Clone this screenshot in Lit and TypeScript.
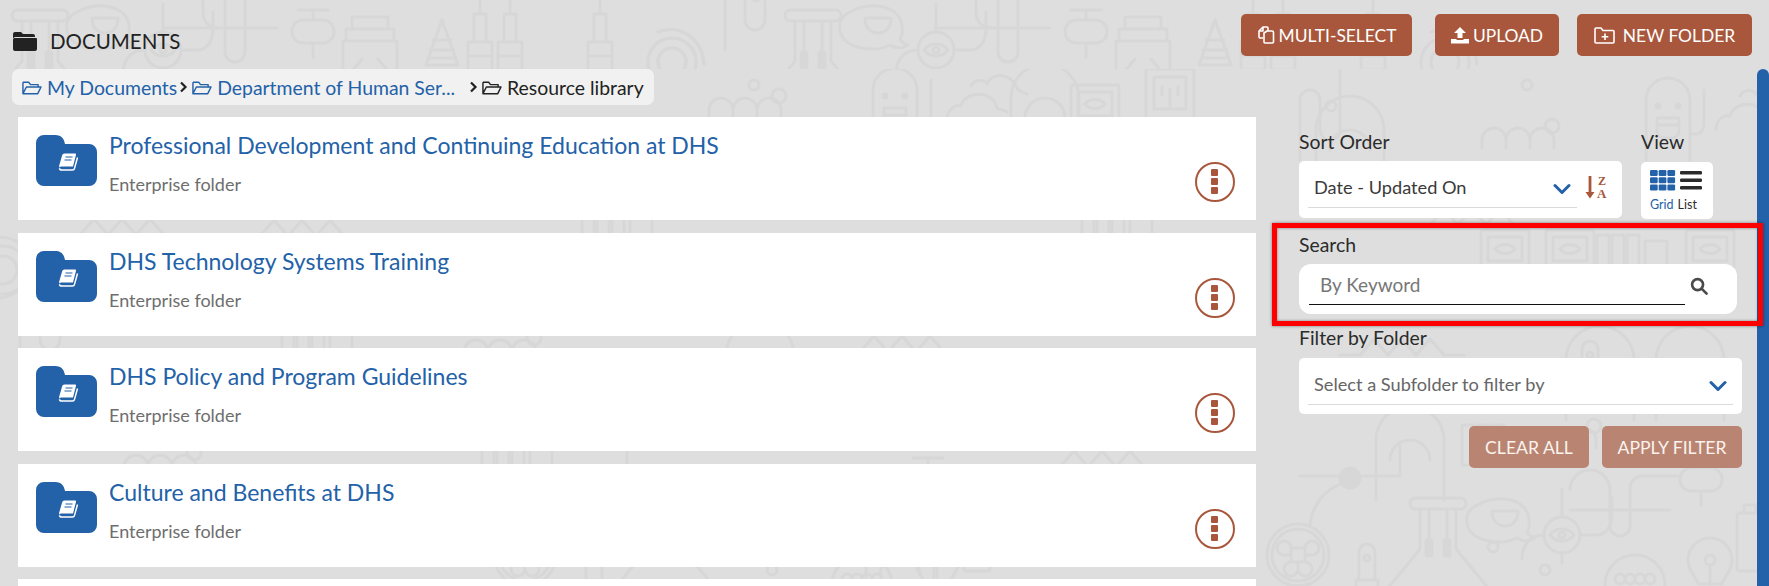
import { LitElement, html, css, svg } from "lit";
import { customElement } from "lit/decorators.js";

const FOLDER_OPEN = "M2 4.5h6l2 2.5h8v3 M2 4.5v12 M2 16.5l3.6-7h15.4l-3.4 7z";

const openIcon = () => html`<svg class="open" viewBox="0 0 22 20" fill="none" stroke="currentColor" stroke-width="1.5" stroke-linejoin="round"><path d=${FOLDER_OPEN}></path></svg>`;

const chevron = () => html`<svg class="chev" viewBox="0 0 18 12" fill="none" stroke="#2361a8" stroke-width="3" stroke-linecap="round" stroke-linejoin="round"><path d="M2 2.5l7 7 7-7"></path></svg>`;

const motifs: Record<string, any> = {
  flask: svg`<rect x="-28" y="0" width="56" height="11" rx="5.5"/><path d="M-18 11v40L-50 90M18 11v40L50 90M-9 11v38M9 11v38"/><rect x="-12" y="42" width="6" height="16" rx="2" fill="#d7d7d7"/><rect x="6" y="42" width="6" height="16" rx="2" fill="#d7d7d7"/>`,
  bubble: svg`<path d="M-28 0c22-12 50-6 52 14 1 6 0 10-2 13 2 4 6 5 8 6-6 4-13 3-18 0-16 8-46 4-50-14-2-9 2-15 10-19z"/><path d="M-13 6h26c0 10-6 15-13 15s-13-5-13-15z"/>`,
  eye: svg`<circle cx="0" cy="0" r="18"/><path d="M-12 0c6-8 18-8 24 0-6 8-18 8-24 0z"/><circle r="3"/><path d="M0 -18v-28M18 0h16c8 0 16-6 16-22v-16M-18 0c-14 0-22 10-22 24M0 18v10"/>`,
  tube: svg`<path d="M-10 -40v62a10 10 0 0 0 20 0v-62M-72 -2H42M-32 -40v22c0 10 6 16 18 16"/>`,
  lozenge: svg`<rect x="-20" y="0" width="42" height="23" rx="11"/><path d="M1 0v-10M-14 -10h30M1 23v14"/>`,
  jar: svg`<path d="M-18 0h36v12h-36zM-24 12h48v12h-48zM-27 24h54v60h-54z"/><path d="M-8 42l-10 12 10 12M8 42l10 12-10 12"/>`,
  cone: svg`<path d="M0 0l16 45H-16zM-9 20H9M-12 30h24M-14 38h28"/>`,
  syringe: svg`<path d="M-6 0h12v28h-12zM-12 28h24v28h-24zM0 0v-14M-12 42h24"/>`,
  coil: svg`<circle r="24"/><circle r="14"/><path d="M-30 8c6 26 40 26 52 4M-14 -30c22-8 44 6 46 32"/>`,
  pills: svg`<path d="M-36 18v-8a12 12 0 0 1 24 0v8M-12 18v-8a12 12 0 0 1 24 0v8M12 18v-8a12 12 0 0 1 24 0v8"/><circle cx="34" cy="-4" r="7"/>`,
  robot: svg`<path d="M-22 50V-10a22 22 0 0 1 44 0v60"/><circle cx="-10" cy="-4" r="2" fill="#d7d7d7"/><circle cx="10" cy="-4" r="2" fill="#d7d7d7"/><path d="M-11 8h22v14a8 8 0 0 1-8 6h-6a8 8 0 0 1-8-6zM-11 15h22M22 24h6c6 0 8-6 8-12v-32"/>`,
  cloud: svg`<path d="M-46 30c0-10 8-16 14-14 4-16 32-16 36 2 2 2 8 2 10 4M-22 -4c4-8 14-6 16-2 4-12 24-12 30 4 2 4 6 4 10 6"/>`,
  monitor: svg`<rect x="-24" y="-20" width="48" height="38" rx="2"/><rect x="-17" y="-13" width="34" height="24"/><path d="M-10 -1c5-6 15-6 20 0-5 6-15 6-20 0z"/>`,
  frame: svg`<rect x="-24" y="-36" width="48" height="90" rx="2"/><rect x="-16" y="-28" width="32" height="32"/><path d="M-10 34h20v8h-20zM0 -16v18M-8 -18v8M8 -18v8"/>`,
  bars: svg`<rect x="-18" y="-20" width="12" height="40"/><rect x="-3" y="-20" width="12" height="40"/><rect x="12" y="-20" width="12" height="40"/><rect x="30" y="-14" width="22" height="28"/>`,
  wave: svg`<path d="M-60 10h20l14-16 14 16 14-16 14 16 14-16 14 16h20"/>`,
  big: svg`<path d="M-34 70V10a34 34 0 0 1 68 0v60"/><path d="M-20 30a20 20 0 0 1 40 0"/>`,
  cmd: svg`<circle r="31"/><circle r="26"/><path d="M-7 -7h14v14h-14zM-7 -7a7 7 0 1 0-7 7h7M7 -7a7 7 0 1 1 7 7h-7M-7 7a7 7 0 1 0 7 7v-7M7 7a7 7 0 1 1-7 7v-7"/>`,
  led: svg`<path d="M-8 22V-6a8 8 0 0 1 16 0v28zM-11 22h22v8h-22z"/><circle r="3"/>`,
  bulb: svg`<path d="M-12 24c-2-8-10-12-10-24a22 22 0 0 1 44 0c0 12-8 16-10 24z"/><path d="M-10 30h20"/><circle cx="0" cy="0" r="5"/><path d="M0 5v19"/>`,
  ball: svg`<circle r="30"/><circle cx="-15" cy="-6" r="5"/><circle cx="-5" cy="-6" r="5"/><circle cx="5" cy="-6" r="5"/><circle cx="15" cy="-6" r="5"/>`,
  dot: svg`<circle r="5"/>`,
  solid: svg`<circle r="10" fill="#d7d7d7"/><path d="M-50 -2h38M10 -2h40v-30M-10 6c-22 10-28 26-30 40"/>`,
  pipe: svg`<path d="M0 70V10a10 10 0 0 1 20 0v30a10 10 0 0 0 20 0V-20"/><circle cx="31" cy="16" r="5"/>`,
  loop: svg`<path d="M-40 -10a20 20 0 1 1 40 0v36a10 10 0 0 0 20 0V-12a12 12 0 0 1 12-12h38M-40 10h100"/>`,
  batt: svg`<rect x="-13" y="-22" width="26" height="58" rx="3"/><path d="M-6 -22v-8h12v8"/>`,
};

type P = [string, number, number];
const P = 773;
const topRow: P[] = [
  ["coil", 672, 62], ["pipe", 725, -20], ["flask", 813, 10], ["bubble", 878, 12], ["eye", 936, 50], ["tube", 1008, 30],
  ["lozenge", 1085, 20], ["jar", 1143, 17], ["cone", 1215, 20], ["syringe", 1253, 14], ["syringe", 1283, 14], ["syringe", 1373, 14], ["coil", 1445, 62],
];
const bodyRow: P[] = [
  ["coil", 695, 35], ["dot", 754, 85], ["pills", 745, 100], ["robot", 895, 100], ["cloud", 993, 90], ["big", 1045, 88], ["monitor", 1095, 105], ["frame", 1170, 105],
  ["dot", 1527, 85], ["pills", 1518, 130], ["robot", 1668, 110], ["cloud", 1762, 100], ["bars", 1615, 255], ["monitor", 1505, 250], ["monitor", 1570, 250],
  ["big", 1350, 120], ["wave", 1400, 345], ["big", 1600, 350], ["led", 1590, 355], ["big", 1410, 430], ["bars", 1480, 445], ["pills", 1560, 430],
  ["big", 1690, 350], ["monitor", 1710, 250], ["pipe", 1300, 90], ["wave", 1470, 215],
  ["pipe", 20, 300], ["coil", 3, 270], ["bars", 600, 226], ["wave", 300, 226], ["wave", 900, 342], ["pills", 160, 457], ["big", 760, 345], ["bars", 500, 457], ["wave", 120, 225], ["big", 900, 545],
  ["wave", 1100, 457], ["bars", 300, 342], ["pills", 500, 342], ["bars", 1100, 226],
];
const bottomRow: P[] = [
  ["cmd", 1298, 555], ["solid", 1350, 478], ["led", 1367, 558], ["flask", 1438, 498], ["dot", 1493, 547], ["bubble", 1505, 505], ["eye", 1562, 535], ["loop", 1610, 500], ["lozenge", 1700, 468], ["bulb", 1710, 560], ["ball", 1635, 585], ["batt", 1750, 535], ["dot", 1545, 570],
];

const place = (list: P[]) => list.map(([n, x, y]) => svg`<g transform="translate(${x} ${y})">${motifs[n]}</g>`);
const shift = (list: P[], d: number) => list.map(([n, x, y]) => [n, x + d, y] as P);

const CARDS = [
  "Professional Development and Continuing Education at DHS",
  "DHS Technology Systems Training",
  "DHS Policy and Program Guidelines",
  "Culture and Benefits at DHS",
];

@customElement("app-root")
export class AppRoot extends LitElement {
  static styles = css`
    :host { display: block; height: 100vh; overflow: hidden; font-family: Lato, "Noto Sans", sans-serif; color: #2b2b2b; }
    .page { position: relative; height: 586px; overflow: hidden; background: #dedede; }
    .doodles { position: absolute; left: 0; top: 0; width: 1769px; height: 586px; fill: none; stroke: #d7d7d7; stroke-width: 3; stroke-linecap: round; stroke-linejoin: round; }
    .content { position: relative; }
    .head { display: flex; align-items: center; padding: 14px 17px 0 12px; height: 42px; }
    .title { display: flex; align-items: center; gap: 13px; flex: 1; font-size: 20.5px; color: #222; padding-top: 12px; }
    .title svg { width: 25px; height: 20px; }
    .btn { display: inline-flex; align-items: center; justify-content: center; height: 42px; box-sizing: border-box; background: #a9573c; color: #fff; border-radius: 5px; font-size: 17.4px; gap: 4px; }
    .btn svg { fill: none; stroke: #fff; stroke-width: 1.6; }
    .b1 { width: 171px; margin-right: 23px; }
    .b2 { width: 124px; margin-right: 18px; }
    .b3 { width: 175px; gap: 8px; }
    .crumb { display: flex; align-items: center; height: 36px; box-sizing: border-box; width: 642px; margin: 13px 0 0 12px; padding-left: 9px; background: #f1f1f1; border-radius: 7px; font-size: 19.4px; color: #2361a8; white-space: nowrap; }
    .open { width: 21px; height: 19px; margin-right: 5px; flex: none; }
    .sep { width: 10px; height: 12px; margin: 0 3px 0 1px; flex: none; fill: none; stroke: #222; stroke-width: 2.2; }
    .sep2 { margin-left: 13px; }
    .here { display: flex; align-items: center; color: #222; }
    .main { display: flex; margin-top: 12px; }
    .cards { width: 1238px; margin-left: 18px; flex: none; }
    .card { display: flex; position: relative; height: 103px; margin-bottom: 12.5px; background: #fff; box-sizing: border-box; padding: 18px 0 0 18px; }
    .folder { width: 61px; height: 51px; flex: none; margin-right: 12px; }
    .text { margin-top: -3px; }
    .name { font-size: 23px; line-height: 26px; color: #2361a8; }
    .sub { font-size: 18px; line-height: 20px; margin-top: 16px; color: #6e6e6e; }
    .kebab { position: absolute; right: 21px; top: 45px; width: 40px; height: 40px; }
    .side { width: 443px; margin-left: 43px; padding-top: 14px; flex: none; font-size: 19.4px; }
    .label { line-height: 21px; color: #2b2b2b; }
    .row { display: flex; }
    .sortcol { width: 323px; margin-right: 19px; }
    .box { background: #fff; border-radius: 5px; box-sizing: border-box; margin-top: 9px; }
    .sort { display: flex; height: 57px; align-items: flex-start; padding: 0 0 0 9px; }
    .sel { display: flex; align-items: center; justify-content: space-between; height: 40px; padding: 6px 6px 0; border-bottom: 1px solid #dadada; box-sizing: content-box; color: #3a3a3a; font-size: 18.2px; }
    .sort .sel { width: 257px; }
    .chev { width: 18px; height: 12px; margin-top: 3px; }
    .az { width: 24px; height: 32px; margin: 8px 0 0 8px; }
    .viewbox { width: 72px; height: 57px; margin-top: 10px; background: #fff; border-radius: 5px; box-sizing: border-box; padding: 8px 0 0 9px; }
    .viewbox svg { display: block; width: 52px; height: 22px; }
    .vt { font-size: 12.5px; margin-top: 5px; display: flex; gap: 4px; line-height: 16px; }
    .vt b { font-weight: 400; color: #2361a8; }
    .search-wrap { position: relative; margin-top: 15px; }
    .search { width: 438px; height: 50px; margin-top: 9px; background: #fff; border-radius: 12px; box-sizing: border-box; padding: 0 0 0 10px; display: flex; }
    .kw { width: 376px; height: 41px; box-sizing: border-box; border-bottom: 1.5px solid #111; padding: 0 0 0 11px; line-height: 42px; color: #777; font-size: 19px; }
    .mag { width: 18px; height: 18px; margin: 13px 0 0 5px; }
    .mark { position: absolute; left: -27px; top: -11px; width: 491px; height: 103px; box-sizing: border-box; border: 5px solid #f00; box-shadow: 0 0 3px rgba(0,0,0,.45), inset 0 0 3px rgba(0,0,0,.45); pointer-events: none; }
    .filter-l { margin-top: 13px; }
    .filter { height: 56px; padding: 0 9px; margin-top: 10px; }
    .filter .sel { color: #666; }
    .acts { display: flex; justify-content: flex-end; gap: 13px; margin-top: 12px; }
    .act { display: flex; align-items: center; justify-content: center; height: 42px; background: #b98572; color: #fbf3ee; border-radius: 5px; font-size: 17.6px; }
    .a1 { width: 120px; }
    .a2 { width: 140px; }
    .scroll { position: absolute; right: 0; top: 69px; width: 12px; bottom: 0; background: #2361a8; border-radius: 6px 6px 0 0; }
  `;

  private bg() {
    const clones = [...topRow, ...shift(topRow, -P), ...shift(topRow, -2 * P)];
    return html`<svg class="doodles" viewBox="0 0 1769 586" aria-hidden="true">
      <svg x="0" y="0" width="1769" height="69" viewBox="0 0 1769 69">${place(clones)}</svg>
      <svg x="0" y="69" width="1769" height="517" viewBox="0 69 1769 517">${place(bodyRow)}${place(bottomRow)}${place(shift(bottomRow, -P))}</svg>
    </svg>`;
  }

  private folder() {
    return html`<svg class="folder" viewBox="0 0 61 51">
      <path fill="#2361a8" d="M8 0h11c7 0 9 4 10 9h24a8 8 0 0 1 8 8v26a8 8 0 0 1-8 8H8a8 8 0 0 1-8-8V8a8 8 0 0 1 8-8z"></path>
      <path fill="#fff" d="M28.500 18.500H39c.8 0 1.200 .6 1 1.300L37 31.500H26c-1.400 0-2.400 .5-2.600 1.200-.3-.6-.4-1.300-.2-2.200l2.900-10c.3-1.100 1.200-2 2.400-2z"></path>
      <path fill="none" stroke="#2361a8" stroke-width="1.200" d="M29.500 22h7M28.500 25h7"></path>
      <path fill="none" stroke="#fff" stroke-width="1.500" d="M41.500 22.500l-3 10.800c-.2 1-1 1.700-2 1.700H26c-1.500 0-2.500-.7-2.500-1.800"></path>
    </svg>`;
  }

  private card(name: string) {
    return html`<div class="card">
      ${this.folder()}
      <div class="text">
        <div class="name">${name}</div>
        <div class="sub">Enterprise folder</div>
      </div>
      <svg class="kebab" viewBox="0 0 40 40">
        <circle cx="20" cy="20" r="19" fill="none" stroke="#a9573c" stroke-width="2"></circle>
        <rect x="16" y="7" width="7" height="7" rx="1" fill="#a9573c"></rect>
        <rect x="16" y="16" width="7" height="7" rx="1" fill="#a9573c"></rect>
        <rect x="16" y="25" width="7" height="7" rx="1" fill="#a9573c"></rect>
      </svg>
    </div>`;
  }

  render() {
    return html`<div class="page">
      ${this.bg()}
      <div class="scroll"></div>
      <div class="content">
        <div class="head">
          <div class="title">
            <svg viewBox="0 0 25 20"><path fill="#222" d="M1 3a2 2 0 0 1 2-2h6l2 2h10a2 2 0 0 1 2 2v1H3.500A2.500 2.500 0 0 0 1 8.500z"></path><path fill="#222" d="M2.500 7H24a1 1 0 0 1 1 1v10a2 2 0 0 1-2 2H3a2 2 0 0 1-2-2V9c0-1 .6-2 1.500-2z"></path></svg>
            DOCUMENTS
          </div>
          <div class="btn b1">
            <svg width="18" height="18" viewBox="0 0 18 18" stroke-linejoin="round"><path d="M6 12H3a1.500 1.500 0 0 1-1-1V5l4-4h4a1 1 0 0 1 1 1v3M2 5h4V1"></path><path d="M7 7l3-2h5a1.500 1.500 0 0 1 1.500 1.500V16a1 1 0 0 1-1 1H8a1 1 0 0 1-1-1z"></path></svg>
            MULTI-SELECT
          </div>
          <div class="btn b2">
            <svg width="18" height="18" viewBox="0 0 18 18"><path fill="#fff" stroke="none" d="M9 1l6 6h-3.500v5h-5V7H3zM0 13h5.500v1h7v-1H18v4.500H0z"></path></svg>
            UPLOAD
          </div>
          <div class="btn b3">
            <svg width="21" height="17" viewBox="0 0 21 17" stroke-linejoin="round"><path d="M1 2a1 1 0 0 1 1-1h5l2 2.500h10a1 1 0 0 1 1 1V15a1 1 0 0 1-1 1H2a1 1 0 0 1-1-1z"></path><path d="M11 6.500v6.500M7.700 9.700h6.600"></path></svg>
            NEW FOLDER
          </div>
        </div>
        <div class="crumb">
          ${openIcon()}My Documents
          <svg class="sep" viewBox="0 0 10 12"><path d="M3 1.500l4.500 4.500L3 10.500"></path></svg>
          ${openIcon()}Department of Human Ser...
          <svg class="sep sep2" viewBox="0 0 10 12"><path d="M3 1.500l4.500 4.500L3 10.500"></path></svg>
          <span class="here">${openIcon()}Resource library</span>
        </div>
        <div class="main">
          <div class="cards">
            ${CARDS.map((c) => this.card(c))}
            <div class="card"></div>
          </div>
          <div class="side">
            <div class="row">
              <div class="sortcol">
                <div class="label">Sort Order</div>
                <div class="box sort">
                  <div class="sel"><span>Date - Updated On</span>${chevron()}</div>
                  <svg class="az" viewBox="0 -6 24 32">
                    <path d="M5 1v19" stroke="#a9573c" stroke-width="2.800" fill="none"></path>
                    <path d="M.5 17h9L5 23.500z" fill="#a9573c"></path>
                    <text x="13" y="9.500" font-family="Liberation Serif" font-weight="700" font-size="12" fill="#a9573c">Z</text>
                    <text x="12" y="23" font-family="Liberation Serif" font-weight="700" font-size="13" fill="#a9573c">A</text>
                  </svg>
                </div>
              </div>
              <div>
                <div class="label">View</div>
                <div class="viewbox">
                  <svg viewBox="0 0 52 22">
                    ${[0, 1, 2].flatMap((c) => [0, 1, 2].map((r) => svg`<rect x=${c * 8.7} y=${r * 7.2} width="7.700" height="6" rx="1.200" fill="#2361a8"></rect>`))}
                    ${[1, 8.5, 16].map((y) => svg`<rect x="30" y=${y} width="22" height="3.500" rx="1.200" fill="#2b2b2b"></rect>`)}
                  </svg>
                  <div class="vt"><b>Grid</b><span>List</span></div>
                </div>
              </div>
            </div>
            <div class="search-wrap">
              <div class="label">Search</div>
              <div class="search">
                <div class="kw">By Keyword</div>
                <svg class="mag" viewBox="0 0 19 19" fill="none" stroke="#4a4a4a" stroke-width="2.800"><circle cx="8" cy="8" r="5.800"></circle><path d="M12.500 12.500l5 5" stroke-linecap="round"></path></svg>
              </div>
              <div class="mark"></div>
            </div>
            <div class="label filter-l">Filter by Folder</div>
            <div class="box filter">
              <div class="sel"><span>Select a Subfolder to filter by</span>${chevron()}</div>
            </div>
            <div class="acts">
              <div class="act a1">CLEAR ALL</div>
              <div class="act a2">APPLY FILTER</div>
            </div>
          </div>
        </div>
      </div>
    </div>`;
  }
}
